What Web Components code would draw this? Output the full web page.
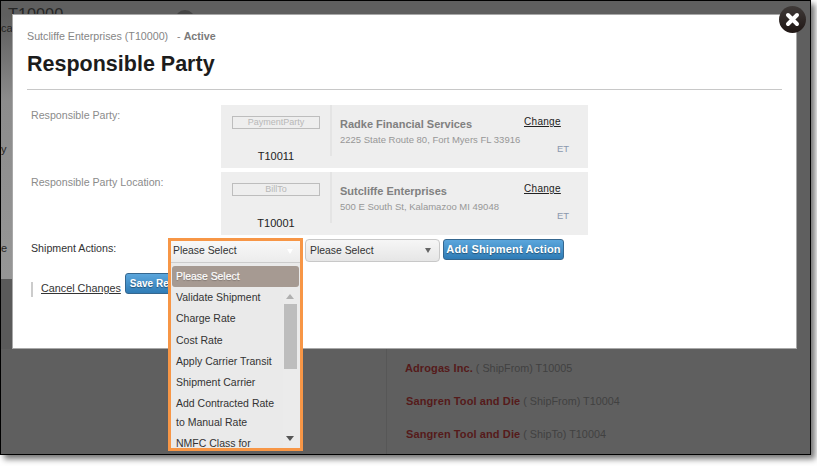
<!DOCTYPE html>
<html><head><meta charset="utf-8"><style>
html,body{margin:0;padding:0;background:#fff;width:817px;height:466px;overflow:hidden;font-family:"Liberation Sans",Arial,sans-serif}
</style></head><body>
<shot-frame>
  <backdrop-page></backdrop-page>
  <modal-window>
    <party-row label="Responsible Party:" tag="PaymentParty" code="T10011" name="Radke Financial Services" addr="2225 State Route 80, Fort Myers FL 33916"></party-row>
    <party-row label="Responsible Party Location:" tag="BillTo" code="T10001" name="Sutcliffe Enterprises" addr="500 E South St, Kalamazoo MI 49048"></party-row>
    <action-row></action-row>
    <footer-row></footer-row>
  </modal-window>
  <close-button></close-button>
  <select-menu></select-menu>
</shot-frame>
<script>
function def(name,html){
  customElements.define(name,class extends HTMLElement{
    connectedCallback(){
      if(this.shadowRoot)return;
      const r=this.attachShadow({mode:'open'});
      r.innerHTML=html.replace(/\{\{(\w+)\}\}/g,(m,k)=>this.getAttribute(k)||'');
    }
  });
}
def('shot-frame',`<style>
:host{display:block;position:relative;width:809px;height:453px;box-sizing:content-box;border:1px solid #000;background:#5f5f5f;box-shadow:4px 4px 6px rgba(0,0,0,.55)}
.clip{position:absolute;inset:0;overflow:hidden}
</style><div class="clip"><slot></slot></div>`);
def('backdrop-page',`<style>
:host{display:block;position:absolute;inset:0;color:#262626}
.t{position:absolute;left:7px;top:4px;font-size:16.3px;color:#262626;line-height:18px}
.side{position:absolute;left:0;top:0;width:12px;height:278px;background:linear-gradient(#5f5f5f 5%,#666 12%,#8c8c8c 36%,#969696)}
.low{position:absolute;left:0;top:278px;width:12px;height:70px;background:#5a5a5a}
.a,.b,.c{position:absolute;left:0;font-size:11px;line-height:13px;color:#262626}
.a{top:21px}.b{top:142px}.c{top:241px}
.circ{position:absolute;left:174px;top:9px;width:20px;height:20px;border-radius:50%;background:#444}
.vline{position:absolute;left:385px;top:347px;bottom:0;width:1px;background:#575757}
.dash{position:absolute;left:475px;top:347px;width:4px;height:1px;background:#333}
.row{position:absolute;font-size:10.8px;line-height:13px;color:#414141;white-space:nowrap}
.row b{color:#551a1a;font-size:11px;letter-spacing:.1px}
.row1{left:404px;top:361px}.row2{left:405px;top:394px}.row3{left:405px;top:427px}
</style>
<div class="side"></div><div class="low"></div><div class="t">T10000</div><div class="circ"></div>
<div class="a">ca</div><div class="b">y</div><div class="c">e</div>
<div class="vline"></div><div class="dash"></div>
<div class="row row1"><b>Adrogas Inc.</b> ( ShipFrom) T10005</div>
<div class="row row2"><b>Sangren Tool and Die</b> ( ShipFrom) T10004</div>
<div class="row row3"><b>Sangren Tool and Die</b> ( ShipTo) T10004</div>`);
def('modal-window',`<style>
:host{display:block;position:absolute;left:11px;top:13px;width:785px;height:335px;box-sizing:border-box;background:#fff;border:1px solid #a8a8a8;padding:15px 14px 0 14px}
.crumb{font-size:10.7px;line-height:13px;color:#858585;white-space:pre}
.crumb b{color:#7a7a7a}
h1{margin:8px 0 0;font-size:21.5px;line-height:26px;color:#1c1c1c;font-weight:bold}
hr{border:0;border-top:1px solid #c8c8c8;margin:12px 0 15px}
.rows{display:flex;flex-direction:column;gap:4px}
</style>
<div class="crumb">Sutcliffe Enterprises (T10000)   - <b>Active</b></div>
<h1>Responsible Party</h1><hr>
<div class="rows"><slot></slot></div>`);
def('party-row',`<style>
:host{display:flex;height:63px;font-size:10.65px}
.lab{width:194px;padding:4px 0 0 4px;box-sizing:border-box;color:#8b8b8b;line-height:13px}
.card{width:367px;height:63px;background:#eee;display:flex;box-sizing:border-box}
.l{width:109px;height:51px;border-right:2px solid #e4e4e4;text-align:center;position:relative}
.tag{margin:11px 0 0 11px;width:88px;height:13px;box-sizing:border-box;border:1px solid #bdbdbd;font-size:9px;line-height:11px;color:#b8b8b8;text-align:center}
.code{position:absolute;left:0;top:45px;width:110px;text-align:center;font-size:11px;line-height:13px;color:#222}
.m{width:186px;padding:12px 0 0 8px}
.name{font-size:11px;font-weight:bold;color:#808080;line-height:14px;white-space:nowrap}
.addr{font-size:9.5px;color:#979797;line-height:12px;margin-top:3px;white-space:nowrap}
.r{flex:1;position:relative}
.chg{position:absolute;left:-2px;top:11px;font-size:10px;line-height:12px;color:#222;text-decoration:underline;letter-spacing:.3px}
.et{position:absolute;left:31px;top:38px;font-size:9.5px;color:#8a98ad;line-height:11px}
</style>
<div class="lab">{{label}}</div>
<div class="card"><div class="l"><div class="tag">{{tag}}</div><div class="code">{{code}}</div></div>
<div class="m"><div class="name">{{name}}</div><div class="addr">{{addr}}</div></div>
<div class="r"><span class="chg">Change</span><span class="et">ET</span></div></div>`);
def('action-row',`<style>
:host{display:flex;align-items:flex-start;font-size:10.65px}
.lab{width:143px;padding:3px 0 0 4px;box-sizing:border-box;color:#333;line-height:13px}
.sel1{width:135px;flex:none}
.sel2{width:135px;height:23px;box-sizing:border-box;border:1px solid #c8c8c8;border-radius:4px;background:linear-gradient(#f6f6f6,#e6e6e6);padding:0 4px;line-height:21px;color:#333;position:relative;margin-right:3px;font-size:10.4px}
.sel2:after{content:"";position:absolute;right:8px;top:8px;border:3.5px solid transparent;border-top:5px solid #666;border-bottom:0}
.btn{width:121px;height:21px;box-sizing:border-box;border:1px solid #35678f;border-radius:3px;background:linear-gradient(#5ba6dc,#2f7cb6);color:#fff;font-weight:bold;font-size:11px;line-height:19px;text-align:center;letter-spacing:.15px;text-shadow:0 1px 1px rgba(0,0,0,.4);white-space:nowrap}
</style>
<div class="lab">Shipment Actions:</div><div class="sel1"></div>
<div class="sel2">Please Select</div><div class="btn">Add Shipment Action</div>`);
def('footer-row',`<style>
:host{display:flex;align-items:flex-start;margin-top:7px;font-size:10.8px}
.bar{width:2px;height:15px;background:#ccc;margin:9px 8px 0 4px}
.c{color:#333;text-decoration:underline;line-height:13px;margin:9px 4px 0 0}
.btn{width:46px;height:21px;box-sizing:border-box;border:1px solid #35678f;border-radius:3px;background:linear-gradient(#5ba6dc,#2f7cb6);color:#fff;font-weight:bold;font-size:10px;line-height:19px;padding-left:4px;text-shadow:0 1px 1px rgba(0,0,0,.4);white-space:nowrap}
</style>
<div class="bar"></div><div class="c">Cancel Changes</div><div class="btn">Save Re</div>`);
def('close-button',`<style>
:host{display:block;position:absolute;left:778px;top:5px;width:27px;height:27px;border-radius:50%;background:linear-gradient(#3f3a38,#1f1614)}
svg{display:block}
</style><svg width="27" height="27" viewBox="0 0 27 27"><path d="M9 9 18 18M18 9 9 18" stroke="#fff" stroke-width="4" stroke-linecap="round"/></svg>`);
def('select-menu',`<style>
:host{display:block;position:absolute;left:167px;top:237px;width:135px;height:213px;box-sizing:border-box;border:3px solid #f79646;background:#eaeaea;font-size:10.5px;color:#333;overflow:hidden}
.head{height:22px;box-sizing:border-box;line-height:19px;padding-left:2px;background:linear-gradient(#f8f8f8,#ececec);border-bottom:1px solid #ccc;position:relative;font-size:10.4px}
.head:after{content:"";position:absolute;right:7px;top:8px;border:3px solid transparent;border-top:5px solid #fff;border-bottom:0}
.list{position:relative;height:185px;overflow:hidden}
.sel{margin:3px 1px 0 1px;height:21px;border-radius:3px;background:#a69a92;color:#fff;line-height:21px;padding-left:4px;font-size:10.4px;text-shadow:0 1px 1px rgba(0,0,0,.25);-webkit-text-stroke:.2px #fff}
.i{padding-left:5px;line-height:19px;margin-bottom:2.33px;width:108px}
.i.s{margin-bottom:1.33px}
.i.w{margin-bottom:2px}
.items{padding-top:1px}
.track{position:absolute;right:0;top:24px;bottom:0;width:17px;background:#ebebeb}
.thumb{position:absolute;left:1px;top:17px;width:13px;height:65px;background:#bdbdbd}
.up{position:absolute;left:3px;top:7px;border:4px solid transparent;border-bottom:5px solid #b0b0b0;border-top:0}
.dn{position:absolute;left:3px;bottom:7px;border:4px solid transparent;border-top:5px solid #555;border-bottom:0}
</style>
<div class="head">Please Select</div>
<div class="list"><div class="sel">Please Select</div>
<div class="items"><div class="i">Validate Shipment</div><div class="i">Charge Rate</div><div class="i">Cost Rate</div><div class="i">Apply Carrier Transit</div><div class="i s">Shipment Carrier</div><div class="i w">Add Contracted Rate to Manual Rate</div><div class="i">NMFC Class for</div></div>
<div class="track"><div class="up"></div><div class="thumb"></div><div class="dn"></div></div></div>`);
</script></body></html>
